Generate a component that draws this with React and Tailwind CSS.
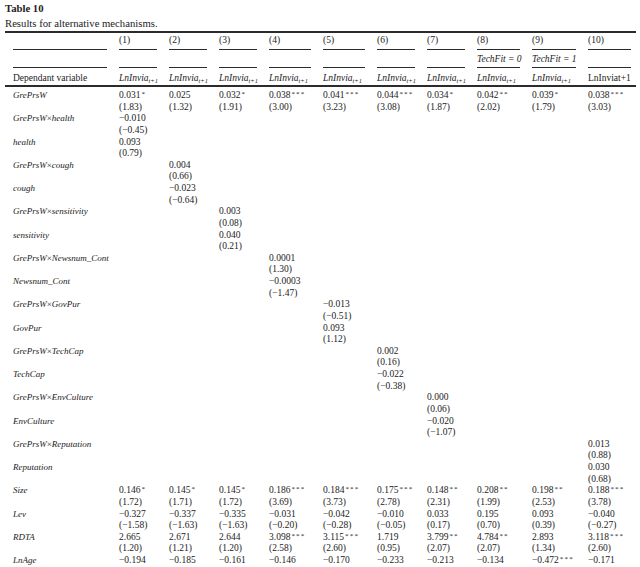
import React from "react";

const cols = [
    "w-[106px]",
    "w-[50px]",
    "w-[50px]",
    "w-[50px]",
    "w-[54px]",
    "w-[54px]",
    "w-[50px]",
    "w-[50px]",
    "w-[55px]",
    "w-[56px]",
    "w-[48px]",
];

const rows = [
    {
        label: "GrePrsW",
        vals: [
            ["0.031*", "(1.83)"],
            ["0.025", "(1.32)"],
            ["0.032*", "(1.91)"],
            ["0.038***", "(3.00)"],
            ["0.041***", "(3.23)"],
            ["0.044***", "(3.08)"],
            ["0.034*", "(1.87)"],
            ["0.042**", "(2.02)"],
            ["0.039*", "(1.79)"],
            ["0.038***", "(3.03)"],
        ],
    },
    { label: ["GrePrsW", "health"], at: 0, val: ["−0.010", "(−0.45)"] },
    { label: "health", at: 0, val: ["0.093", "(0.79)"] },
    { label: ["GrePrsW", "cough"], at: 1, val: ["0.004", "(0.66)"] },
    { label: "cough", at: 1, val: ["−0.023", "(−0.64)"] },
    { label: ["GrePrsW", "sensitivity"], at: 2, val: ["0.003", "(0.08)"] },
    { label: "sensitivity", at: 2, val: ["0.040", "(0.21)"] },
    { label: ["GrePrsW", "Newsnum_Cont"], at: 3, val: ["0.0001", "(1.30)"] },
    { label: "Newsnum_Cont", at: 3, val: ["−0.0003", "(−1.47)"] },
    { label: ["GrePrsW", "GovPur"], at: 4, val: ["−0.013", "(−0.51)"] },
    { label: "GovPur", at: 4, val: ["0.093", "(1.12)"] },
    { label: ["GrePrsW", "TechCap"], at: 5, val: ["0.002", "(0.16)"] },
    { label: "TechCap", at: 5, val: ["−0.022", "(−0.38)"] },
    { label: ["GrePrsW", "EnvCulture"], at: 6, val: ["0.000", "(0.06)"] },
    { label: "EnvCulture", at: 6, val: ["−0.020", "(−1.07)"] },
    { label: ["GrePrsW", "Reputation"], at: 9, val: ["0.013", "(0.88)"] },
    { label: "Reputation", at: 9, val: ["0.030", "(0.68)"] },
    {
        label: "Size",
        vals: [
            ["0.146*", "(1.72)"],
            ["0.145*", "(1.71)"],
            ["0.145*", "(1.72)"],
            ["0.186***", "(3.69)"],
            ["0.184***", "(3.73)"],
            ["0.175***", "(2.78)"],
            ["0.148**", "(2.31)"],
            ["0.208**", "(1.99)"],
            ["0.198**", "(2.53)"],
            ["0.188***", "(3.78)"],
        ],
    },
    {
        label: "Lev",
        vals: [
            ["−0.327", "(−1.58)"],
            ["−0.337", "(−1.63)"],
            ["−0.335", "(−1.63)"],
            ["−0.031", "(−0.20)"],
            ["−0.042", "(−0.28)"],
            ["−0.010", "(−0.05)"],
            ["0.033", "(0.17)"],
            ["0.195", "(0.70)"],
            ["0.093", "(0.39)"],
            ["−0.040", "(−0.27)"],
        ],
    },
    {
        label: "RDTA",
        vals: [
            ["2.665", "(1.20)"],
            ["2.671", "(1.21)"],
            ["2.644", "(1.20)"],
            ["3.098***", "(2.58)"],
            ["3.115***", "(2.60)"],
            ["1.719", "(0.95)"],
            ["3.799**", "(2.07)"],
            ["4.784**", "(2.07)"],
            ["2.893", "(1.34)"],
            ["3.118***", "(2.60)"],
        ],
    },
    {
        label: "LnAge",
        vals: [
            ["−0.194"],
            ["−0.185"],
            ["−0.161"],
            ["−0.146"],
            ["−0.170"],
            ["−0.233"],
            ["−0.213"],
            ["−0.134"],
            ["−0.472***"],
            ["−0.171"],
        ],
    },
];

// split "0.038***" into number + stars
const Num = ({ text }) => {
    if (!text) return null;
    const m = text.match(/^([^*]*)(\**)$/);
    return (
        <>
            {m[1]}
            {m[2] && (
                <span className="relative -top-[2px] text-[7px] leading-none tracking-[1.2px] ml-[1px]">
                    {m[2]}
                </span>
            )}
        </>
    );
};

const Label = ({ label }) => {
    if (Array.isArray(label)) {
        return (
            <span className="italic">
                {label[0]}
                <span className="not-italic">×</span>
                {label[1]}
            </span>
        );
    }
    return <span className="italic">{label}</span>;
};

const Invia = () => (
    <span className="italic">
        LnInvia
        <span className="relative top-[2px] text-[6.5px] leading-none">t+1</span>
    </span>
);

const Line = ({ last }) => (
    <div className={`border-b-[1.5px] border-[#2b2b2b] ${last ? "mr-[5px]" : "mr-3"}`} />
);

const App = () => {
    const headNums = ["(1)", "(2)", "(3)", "(4)", "(5)", "(6)", "(7)", "(8)", "(9)", "(10)"];
    return (
        <div className="w-[640px] pl-[5px] pr-[4px] bg-white text-[#222] font-['Liberation_Serif',serif]">
            <div className="pt-[1px] text-[10.7px]">
                <div className="font-bold leading-[14px]">Table 10</div>
                <div className="leading-[16px]">Results for alternative mechanisms.</div>
            </div>
            <div className="border-t-2 border-[#2b2b2b]" />

            <div className="pl-2 text-[9.5px]">
                {/* header row: column numbers */}
                <div className="flex pt-[1px]">
                    {cols.map((w, i) => (
                        <div key={i} className={w}>
                            <div className="leading-[12px] h-[12px]">{i > 0 ? headNums[i - 1] : ""}</div>
                            <div className="pt-[2.5px]">
                                <Line last={i === 10} />
                            </div>
                        </div>
                    ))}
                </div>
                {/* header row: subsample */}
                <div className="flex pt-[3px]">
                    {cols.map((w, i) => (
                        <div key={i} className={w}>
                            <div className="leading-[12px] h-[12px] italic whitespace-nowrap">
                                {i === 8 ? "TechFit = 0" : i === 9 ? "TechFit = 1" : ""}
                            </div>
                            <div className="pt-[2px]">
                                <Line last={i === 10} />
                            </div>
                        </div>
                    ))}
                </div>
                {/* header row: dependent variable */}
                <div className="flex pt-[4.5px]">
                    {cols.map((w, i) => (
                        <div key={i} className={`${w} leading-[12px] h-[12px] whitespace-nowrap`}>
                            {i === 0 ? "Dependant variable" : i === 10 ? "LnInviat+1" : <Invia />}
                        </div>
                    ))}
                </div>
            </div>
            <div className="mt-[1px] border-t-2 border-[#2b2b2b]" />

            <div className="pl-2 pt-[3px] text-[9.5px] leading-[11.625px]">
                {rows.map((r, ri) => {
                    const vals = r.vals || Array.from({ length: 10 }, (_, k) => (k === r.at ? r.val : null));
                    return (
                        <div key={ri} className="flex min-h-[23.25px]">
                            <div className={`${cols[0]} whitespace-nowrap text-[9px]`}>
                                <Label label={r.label} />
                            </div>
                            {vals.map((v, k) => (
                                <div key={k} className={`${cols[k + 1]} whitespace-nowrap`}>
                                    {v && (
                                        <>
                                            <div className="h-[11.625px]">
                                                <Num text={v[0]} />
                                            </div>
                                            {v[1] && <div className="h-[11.625px]">{v[1]}</div>}
                                        </>
                                    )}
                                </div>
                            ))}
                        </div>
                    );
                })}
            </div>
        </div>
    );
};

export default App;
